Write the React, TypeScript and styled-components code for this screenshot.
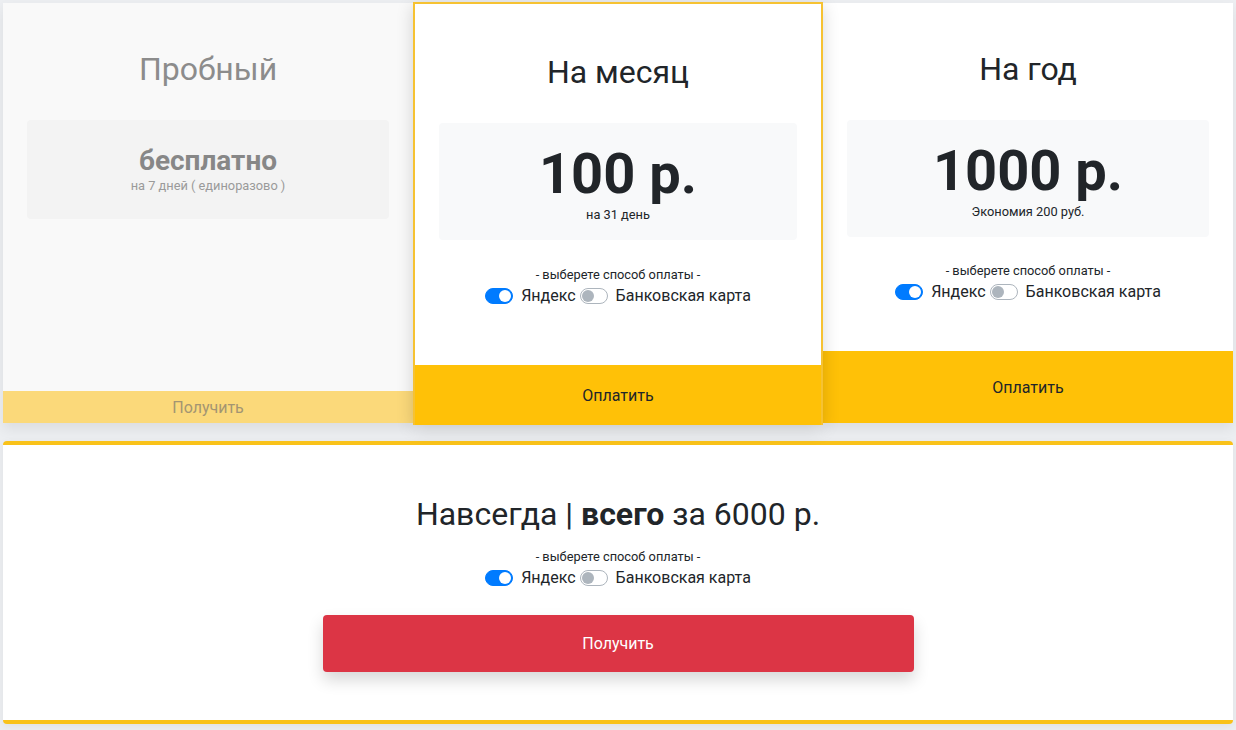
import * as React from 'react'
import styled, { createGlobalStyle, css } from 'styled-components'

const Dark = '#212529'
const Yellow = '#ffc107'

const GlobalStyle = createGlobalStyle`
    html, body {
        margin: 0;
        padding: 0;
        background: #eceef1;
        font-family: Roboto, "Noto Sans", "Liberation Sans", sans-serif;
        color: ${Dark};
    }
    * { box-sizing: border-box; }
`

const StyledDivPage = styled.div`
    padding: 3px 3px 6px;
    display: flex;
    flex-direction: column;
    gap: 18px;
`
const StyledDivRow = styled.div`
    display: grid;
    grid-template-columns: 1fr 1fr 1fr;
    grid-auto-rows: 420px;
`
const StyledDivCard = styled.div<{ $featured?: boolean; $muted?: boolean }>`
    display: flex;
    flex-direction: column;
    text-align: center;
    background: ${p => (p.$muted ? '#f9f9f9' : '#ffffff')};
    box-shadow: 0 6px 12px rgba(0, 0, 0, 0.07);
    position: relative;
    ${p =>
        p.$featured &&
        css`
            z-index: 1;
            margin: -1px 0 -2px;
            border: 2px solid #f6c232;
            border-bottom: none;
            box-shadow: 0 4px 16px rgba(0, 0, 0, 0.16);
        `}
`
const StyledDivCardBody = styled.div<{ $top: number }>`
    padding: ${p => p.$top}px 24px 0;
`
const StyledH2Title = styled.h2<{ $muted?: boolean }>`
    margin: 0 0 32px;
    font-size: 32px;
    line-height: 38px;
    font-weight: 400;
    color: ${p => (p.$muted ? '#8c8c8c' : Dark)};
`
const StyledDivPriceBox = styled.div<{ $muted?: boolean }>`
    border-radius: 4px;
    background: ${p => (p.$muted ? '#f3f3f3' : '#f8f9fa')};
    padding: ${p => (p.$muted ? '24px 16px 24px' : '23px 16px 16px')};
`
const StyledDivPrice = styled.div`
    font-size: 56px;
    line-height: 56px;
    font-weight: 700;
    color: ${Dark};
`
const StyledDivFree = styled.div`
    font-size: 28px;
    line-height: 33px;
    font-weight: 700;
    color: #878787;
`
const StyledDivNote = styled.div<{ $muted?: boolean }>`
    margin-top: ${p => (p.$muted ? '0' : '4px')};
    font-size: 12.8px;
    line-height: 18px;
    color: ${p => (p.$muted ? '#9a9a9a' : Dark)};
`
const StyledDivChoose = styled.div<{ $gap: number }>`
    margin-top: ${p => p.$gap}px;
    font-size: 12.8px;
    line-height: 18px;
    color: ${Dark};
`
const StyledDivSwitchRow = styled.div`
    display: flex;
    justify-content: center;
    align-items: center;
    gap: 4px;
    height: 24px;
`
const StyledLabelSwitch = styled.label`
    display: flex;
    align-items: center;
    gap: 8px;
    font-size: 16px;
    line-height: 24px;
    color: ${Dark};
    cursor: pointer;
`
const StyledSpanToggle = styled.span<{ $on?: boolean }>`
    position: relative;
    display: inline-block;
    width: 28px;
    height: 16px;
    border-radius: 8px;
    border: 1px solid ${p => (p.$on ? '#007bff' : '#adb5bd')};
    background: ${p => (p.$on ? '#007bff' : '#ffffff')};
    &::after {
        content: '';
        position: absolute;
        top: 1px;
        left: ${p => (p.$on ? '13px' : '1px')};
        width: 12px;
        height: 12px;
        border-radius: 50%;
        background: ${p => (p.$on ? '#ffffff' : '#adb5bd')};
    }
`
const StyledButtonPay = styled.button<{ $height: number; $muted?: boolean }>`
    margin-top: auto;
    height: ${p => p.$height}px;
    width: 100%;
    border: none;
    background: ${p => (p.$muted ? '#fbd97a' : Yellow)};
    color: ${p => (p.$muted ? '#a39572' : Dark)};
    font-family: inherit;
    font-size: 16px;
    cursor: pointer;
`
const StyledDivForever = styled.div`
    background: #ffffff;
    border-top: 4px solid #f9c21a;
    border-bottom: 4px solid #f9c21a;
    border-radius: 4px;
    box-shadow: 0 2px 8px rgba(0, 0, 0, 0.06);
    padding: 50px 24px 48px;
    display: flex;
    flex-direction: column;
    align-items: center;
    text-align: center;
`
const StyledButtonGet = styled.button`
    margin-top: 25px;
    width: 50%;
    height: 57px;
    border: none;
    border-radius: 4px;
    background: #dc3545;
    color: #ffffff;
    font-family: inherit;
    font-size: 16px;
    box-shadow: 0 8px 16px rgba(0, 0, 0, 0.16);
    cursor: pointer;
`

function PaySwitches() {
    return (
        <StyledDivSwitchRow>
            <StyledLabelSwitch><StyledSpanToggle $on />Яндекс</StyledLabelSwitch>
            <StyledLabelSwitch><StyledSpanToggle />Банковская карта</StyledLabelSwitch>
        </StyledDivSwitchRow>
    )
}

export default function App() {
    return (
        <StyledDivPage>
            <GlobalStyle />
            <StyledDivRow>
                <StyledDivCard $muted>
                    <StyledDivCardBody $top={47}>
                        <StyledH2Title $muted>Пробный</StyledH2Title>
                        <StyledDivPriceBox $muted>
                            <StyledDivFree>бесплатно</StyledDivFree>
                            <StyledDivNote $muted>на 7 дней ( единоразово )</StyledDivNote>
                        </StyledDivPriceBox>
                    </StyledDivCardBody>
                    <StyledButtonPay $muted $height={32}>Получить</StyledButtonPay>
                </StyledDivCard>

                <StyledDivCard $featured>
                    <StyledDivCardBody $top={49}>
                        <StyledH2Title>На месяц</StyledH2Title>
                        <StyledDivPriceBox>
                            <StyledDivPrice>100 р.</StyledDivPrice>
                            <StyledDivNote>на 31 день</StyledDivNote>
                        </StyledDivPriceBox>
                        <StyledDivChoose $gap={26}>- выберете способ оплаты -</StyledDivChoose>
                        <PaySwitches />
                    </StyledDivCardBody>
                    <StyledButtonPay $height={60}>Оплатить</StyledButtonPay>
                </StyledDivCard>

                <StyledDivCard>
                    <StyledDivCardBody $top={47}>
                        <StyledH2Title>На год</StyledH2Title>
                        <StyledDivPriceBox>
                            <StyledDivPrice>1000 р.</StyledDivPrice>
                            <StyledDivNote>Экономия 200 руб.</StyledDivNote>
                        </StyledDivPriceBox>
                        <StyledDivChoose $gap={25}>- выберете способ оплаты -</StyledDivChoose>
                        <PaySwitches />
                    </StyledDivCardBody>
                    <StyledButtonPay $height={72}>Оплатить</StyledButtonPay>
                </StyledDivCard>
            </StyledDivRow>

            <StyledDivForever>
                <StyledH2Title style={{ marginBottom: 0 }}>
                    Навсегда | <b>всего</b> за 6000 р.
                </StyledH2Title>
                <StyledDivChoose $gap={15}>- выберете способ оплаты -</StyledDivChoose>
                <PaySwitches />
                <StyledButtonGet>Получить</StyledButtonGet>
            </StyledDivForever>
        </StyledDivPage>
    )
}
